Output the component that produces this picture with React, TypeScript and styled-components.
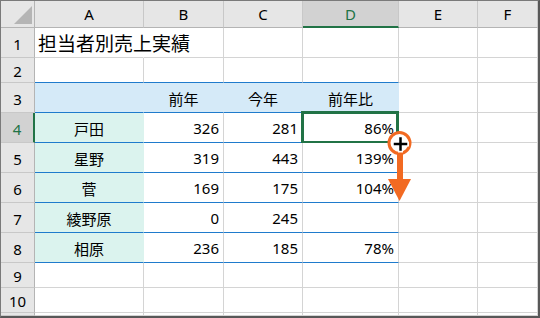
import React from 'react';
import styled, { createGlobalStyle } from 'styled-components';

const GlobalStyle = createGlobalStyle`
  html, body { margin: 0; padding: 0; background: #fff; }
  body { font-family: "Noto Sans", "Noto Sans CJK JP", sans-serif; }
`;

const GRID = '#d4d4d4';
const BLUE = '#1f7bcc';
const HEAD_FILL = '#d5eaf8';
const NAME_FILL = '#dbf3ee';
const GREEN = '#217346';

const Frame = styled.div`
  position: relative;
  box-sizing: border-box;
  width: 540px;
  height: 318px;
  overflow: hidden;
  border-top: 1px solid #7a7a7a;
  border-left: 1px solid #7a7a7a;
  border-right: 2px solid #585858;
  border-bottom: 2px solid #585858;
  font-family: "Noto Sans", "Noto Sans CJK JP", sans-serif;
  color: #000;
`;

const Sheet = styled.div`
  display: grid;
  grid-template-columns: 34px 109px 80px 79px 96px 79px 1fr;
  grid-template-rows: 27px 30px 25px repeat(6, 30px) 25px 25px 1fr;
  height: 100%;
`;

const Corner = styled.div`
  box-sizing: border-box;
  background: #e6e6e6;
  border-right: 1px solid #b4b4b4;
  border-bottom: 1px solid #b4b4b4;
  display: flex;
  align-items: flex-end;
  justify-content: flex-end;
  padding: 0 2px 3px 0;
`;

const ColHeader = styled.div<{ $active?: boolean }>`
  box-sizing: border-box;
  background: ${p => (p.$active ? '#d2d2d2' : '#e6e6e6')};
  border-right: 1px solid #c8c8c8;
  border-bottom: ${p => (p.$active ? `2px solid ${GREEN}` : '1px solid #b4b4b4')};
  color: ${p => (p.$active ? GREEN : '#000')};
  display: flex;
  align-items: center;
  justify-content: center;
  font-size: 15px;
  padding-top: ${p => (p.$active ? '1px' : '0')};
`;

const RowHeader = styled.div<{ $active?: boolean }>`
  box-sizing: border-box;
  background: ${p => (p.$active ? '#d2d2d2' : '#e6e6e6')};
  border-right: ${p => (p.$active ? `2px solid ${GREEN}` : '1px solid #b4b4b4')};
  border-bottom: 1px solid #c8c8c8;
  color: ${p => (p.$active ? GREEN : '#000')};
  display: flex;
  align-items: center;
  justify-content: center;
  font-size: 15px;
  padding-top: 2px;
`;

type Align = 'left' | 'center' | 'right';

const Cell = styled.div<{ $fill?: string; $align?: Align; $bottom?: string; $right?: string; $title?: boolean }>`
  position: relative;
  box-sizing: border-box;
  background: ${p => p.$fill ?? '#fff'};
  border-right: 1px solid ${p => p.$right ?? GRID};
  border-bottom: 1px solid ${p => p.$bottom ?? GRID};
  display: flex;
  align-items: center;
  justify-content: ${p => (p.$align === 'right' ? 'flex-end' : p.$align === 'center' ? 'center' : 'flex-start')};
  padding: 1px 4px 0 ${p => (p.$title ? '3px' : '4px')};
  font-size: ${p => (p.$title ? '19px' : '15px')};
  white-space: nowrap;
  overflow: visible;
  z-index: ${p => (p.$title ? 1 : 0)};
`;

const Selection = styled.div`
  position: absolute;
  top: -2px;
  left: -2px;
  right: -1px;
  bottom: -2px;
  border: 3px solid ${GREEN};
  box-sizing: border-box;
  pointer-events: none;
`;

const Overlay = styled.svg`
  position: absolute;
  left: 383px;
  top: 126px;
  z-index: 5;
`;

const CornerTriangle = () => (
  <svg width="18" height="18" viewBox="0 0 18 18">
    <polygon points="18,0 18,18 0,18" fill="#b5b5b5" />
  </svg>
);

const cols = ['A', 'B', 'C', 'D', 'E', 'F'];

type Row = { name: string; prev: string; cur: string; ratio: string };
const data: Row[] = [
  { name: '戸田', prev: '326', cur: '281', ratio: '86%' },
  { name: '星野', prev: '319', cur: '443', ratio: '139%' },
  { name: '菅', prev: '169', cur: '175', ratio: '104%' },
  { name: '綾野原', prev: '0', cur: '245', ratio: '' },
  { name: '相原', prev: '236', cur: '185', ratio: '78%' },
];

const EmptyRow: React.FC<{ n: number | string }> = ({ n }) => (
  <>
    <RowHeader>{n}</RowHeader>
    {cols.map(c => (
      <Cell key={c} />
    ))}
  </>
);

export default function App() {
  return (
    <>
      <GlobalStyle />
      <Frame>
        <Sheet>
          <Corner>
            <CornerTriangle />
          </Corner>
          {cols.map(c => (
            <ColHeader key={c} $active={c === 'D'}>
              {c}
            </ColHeader>
          ))}

          <RowHeader>1</RowHeader>
          <Cell $title $right="#fff">担当者別売上実績</Cell>
          <Cell />
          <Cell />
          <Cell />
          <Cell />
          <Cell />

          <RowHeader>2</RowHeader>
          <Cell $bottom={BLUE} />
          <Cell $bottom={BLUE} />
          <Cell $bottom={BLUE} />
          <Cell $bottom={BLUE} />
          <Cell />
          <Cell />

          <RowHeader>3</RowHeader>
          <Cell $fill={HEAD_FILL} $right={HEAD_FILL} $bottom={BLUE} />
          <Cell $fill={HEAD_FILL} $right={HEAD_FILL} $bottom={BLUE} $align="center">前年</Cell>
          <Cell $fill={HEAD_FILL} $right={HEAD_FILL} $bottom={BLUE} $align="center">今年</Cell>
          <Cell $fill={HEAD_FILL} $right={HEAD_FILL} $bottom={BLUE} $align="center">前年比</Cell>
          <Cell />
          <Cell />

          {data.map((r, i) => (
            <React.Fragment key={r.name}>
              <RowHeader $active={i === 0}>{i + 4}</RowHeader>
              <Cell $fill={NAME_FILL} $right={NAME_FILL} $bottom={BLUE} $align="center">{r.name}</Cell>
              <Cell $bottom={BLUE} $align="right">{r.prev}</Cell>
              <Cell $bottom={BLUE} $align="right">{r.cur}</Cell>
              <Cell $bottom={BLUE} $align="right">
                {r.ratio}
                {i === 0 && <Selection />}
              </Cell>
              <Cell />
              <Cell />
            </React.Fragment>
          ))}

          <EmptyRow n={9} />
          <EmptyRow n={10} />
          <EmptyRow n="" />
        </Sheet>

        <Overlay width="32" height="80" viewBox="0 0 32 80">
          <rect x="13" y="26" width="6" height="27" fill="#f26a22" />
          <polygon points="4,52 27,52 15.5,74" fill="#f26a22" />
          <circle cx="15.5" cy="16" r="10.5" fill="#fff" stroke="#f26a22" strokeWidth="3" />
          <g strokeLinecap="square">
            <line x1="16.5" y1="11" x2="16.5" y2="23" stroke="#fff" strokeWidth="5" />
            <line x1="10.5" y1="17" x2="22.5" y2="17" stroke="#fff" strokeWidth="5" />
            <line x1="16.5" y1="11.5" x2="16.5" y2="22.5" stroke="#000" strokeWidth="2.5" />
            <line x1="11" y1="17" x2="22" y2="17" stroke="#000" strokeWidth="2.5" />
          </g>
        </Overlay>
      </Frame>
    </>
  );
}
